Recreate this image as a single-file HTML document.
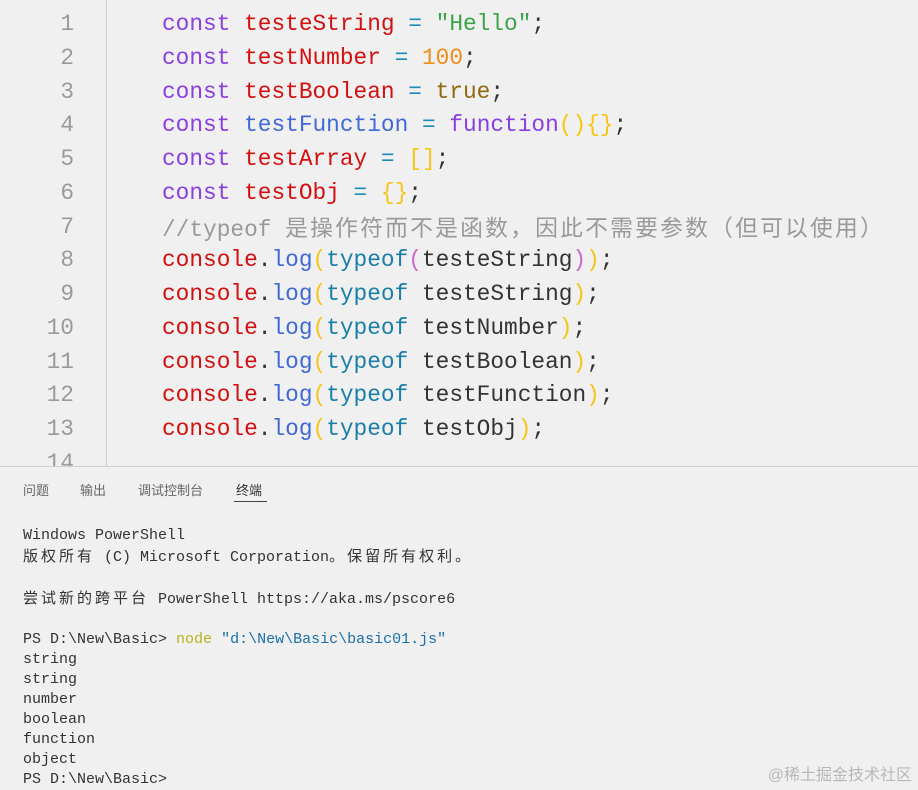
<!DOCTYPE html>
<html><head><meta charset="utf-8"><style>
body{margin:0;width:918px;height:787px;background:#f0f0f0;overflow:hidden;position:relative;font-family:"Liberation Mono","Noto Sans CJK SC",monospace}
.ed{position:absolute;left:0;top:0;width:918px;height:466px}
.gut{position:absolute;left:106px;top:0;width:1px;height:466px;background:#cfcfcf}
.ln{position:absolute;left:0;width:74px;text-align:right;color:#9a9a9a;font-size:22.8px;line-height:34px}
.cl{position:absolute;left:162px;font-size:22.8px;line-height:34px;white-space:pre;color:#333}
.k{color:#8a3fe0}.v{color:#d40f0f}.b{color:#4169d6}.o{color:#1a8cb8}.s{color:#3ba34a}.n{color:#f08c1a}.t{color:#8f6a10}.y{color:#f5c518}.p{color:#c868c8}.c{color:#999}.d{color:#1a7fa8}
.cj{letter-spacing:2.2px;font-family:"Noto Sans CJK SC",sans-serif}
.sep{position:absolute;left:0;top:466px;width:918px;height:1px;background:#d0d0d0}
.tab{position:absolute;top:480px;font-size:13px;color:#666;font-family:"Liberation Sans","Noto Sans CJK SC",sans-serif}
.term{position:absolute;left:23px;top:526px;font-size:15px;line-height:20px;white-space:pre;color:#333}
.tc{letter-spacing:3px;font-family:"Noto Sans CJK SC",sans-serif}
</style></head><body>
<div class="ed">
<div class="gut"></div>
<div class="ln" style="top:7px">1</div>
<div class="ln" style="top:41px">2</div>
<div class="ln" style="top:75px">3</div>
<div class="ln" style="top:108px">4</div>
<div class="ln" style="top:142px">5</div>
<div class="ln" style="top:176px">6</div>
<div class="ln" style="top:210px">7</div>
<div class="ln" style="top:243px">8</div>
<div class="ln" style="top:277px">9</div>
<div class="ln" style="top:311px">10</div>
<div class="ln" style="top:345px">11</div>
<div class="ln" style="top:378px">12</div>
<div class="ln" style="top:412px">13</div>
<div class="ln" style="top:446px">14</div>
<div class="cl" style="top:7px"><span class="k">const</span> <span class="v">testeString</span> <span class="o">=</span> <span class="s">"Hello"</span>;</div>
<div class="cl" style="top:41px"><span class="k">const</span> <span class="v">testNumber</span> <span class="o">=</span> <span class="n">100</span>;</div>
<div class="cl" style="top:75px"><span class="k">const</span> <span class="v">testBoolean</span> <span class="o">=</span> <span class="t">true</span>;</div>
<div class="cl" style="top:108px"><span class="k">const</span> <span class="b">testFunction</span> <span class="o">=</span> <span class="k">function</span><span class="y">(){}</span>;</div>
<div class="cl" style="top:142px"><span class="k">const</span> <span class="v">testArray</span> <span class="o">=</span> <span class="y">[]</span>;</div>
<div class="cl" style="top:176px"><span class="k">const</span> <span class="v">testObj</span> <span class="o">=</span> <span class="y">{}</span>;</div>
<div class="cl c" style="top:210px">//typeof <span class="cj">是操作符而不是函数，因此不需要参数（但可以使用）</span></div>
<div class="cl" style="top:243px"><span class="v">console</span>.<span class="b">log</span><span class="y">(</span><span class="d">typeof</span><span class="p">(</span>testeString<span class="p">)</span><span class="y">)</span>;</div>
<div class="cl" style="top:277px"><span class="v">console</span>.<span class="b">log</span><span class="y">(</span><span class="d">typeof</span> testeString<span class="y">)</span>;</div>
<div class="cl" style="top:311px"><span class="v">console</span>.<span class="b">log</span><span class="y">(</span><span class="d">typeof</span> testNumber<span class="y">)</span>;</div>
<div class="cl" style="top:345px"><span class="v">console</span>.<span class="b">log</span><span class="y">(</span><span class="d">typeof</span> testBoolean<span class="y">)</span>;</div>
<div class="cl" style="top:378px"><span class="v">console</span>.<span class="b">log</span><span class="y">(</span><span class="d">typeof</span> testFunction<span class="y">)</span>;</div>
<div class="cl" style="top:412px"><span class="v">console</span>.<span class="b">log</span><span class="y">(</span><span class="d">typeof</span> testObj<span class="y">)</span>;</div>
</div>
<div style="position:absolute;left:0;top:466px;width:918px;height:321px;background:#f0f0f0"></div>
<div class="sep"></div>
<div class="tab" style="left:23px">问题</div>
<div class="tab" style="left:80px">输出</div>
<div class="tab" style="left:138px">调试控制台</div>
<div class="tab" style="left:236px;color:#333">终端</div>
<div style="position:absolute;left:234px;top:501px;width:33px;height:1px;background:#444"></div>
<div class="term">Windows PowerShell
<span class="tc">版权所有</span> (C) Microsoft Corporation<span class="tc">。保留所有权利。</span>

<span class="tc">尝试新的跨平台</span> PowerShell https://aka.ms/pscore6

PS D:\New\Basic&gt; <span style="color:#b5b51a">node</span> <span style="color:#1a6fa8">"d:\New\Basic\basic01.js"</span>
string
string
number
boolean
function
object
PS D:\New\Basic&gt;</div>
<div style="position:absolute;right:6px;top:761px;font-size:16px;color:#b8b8b8;font-family:'Liberation Sans','Noto Sans CJK SC',sans-serif">@稀土掘金技术社区</div>
</body></html>
